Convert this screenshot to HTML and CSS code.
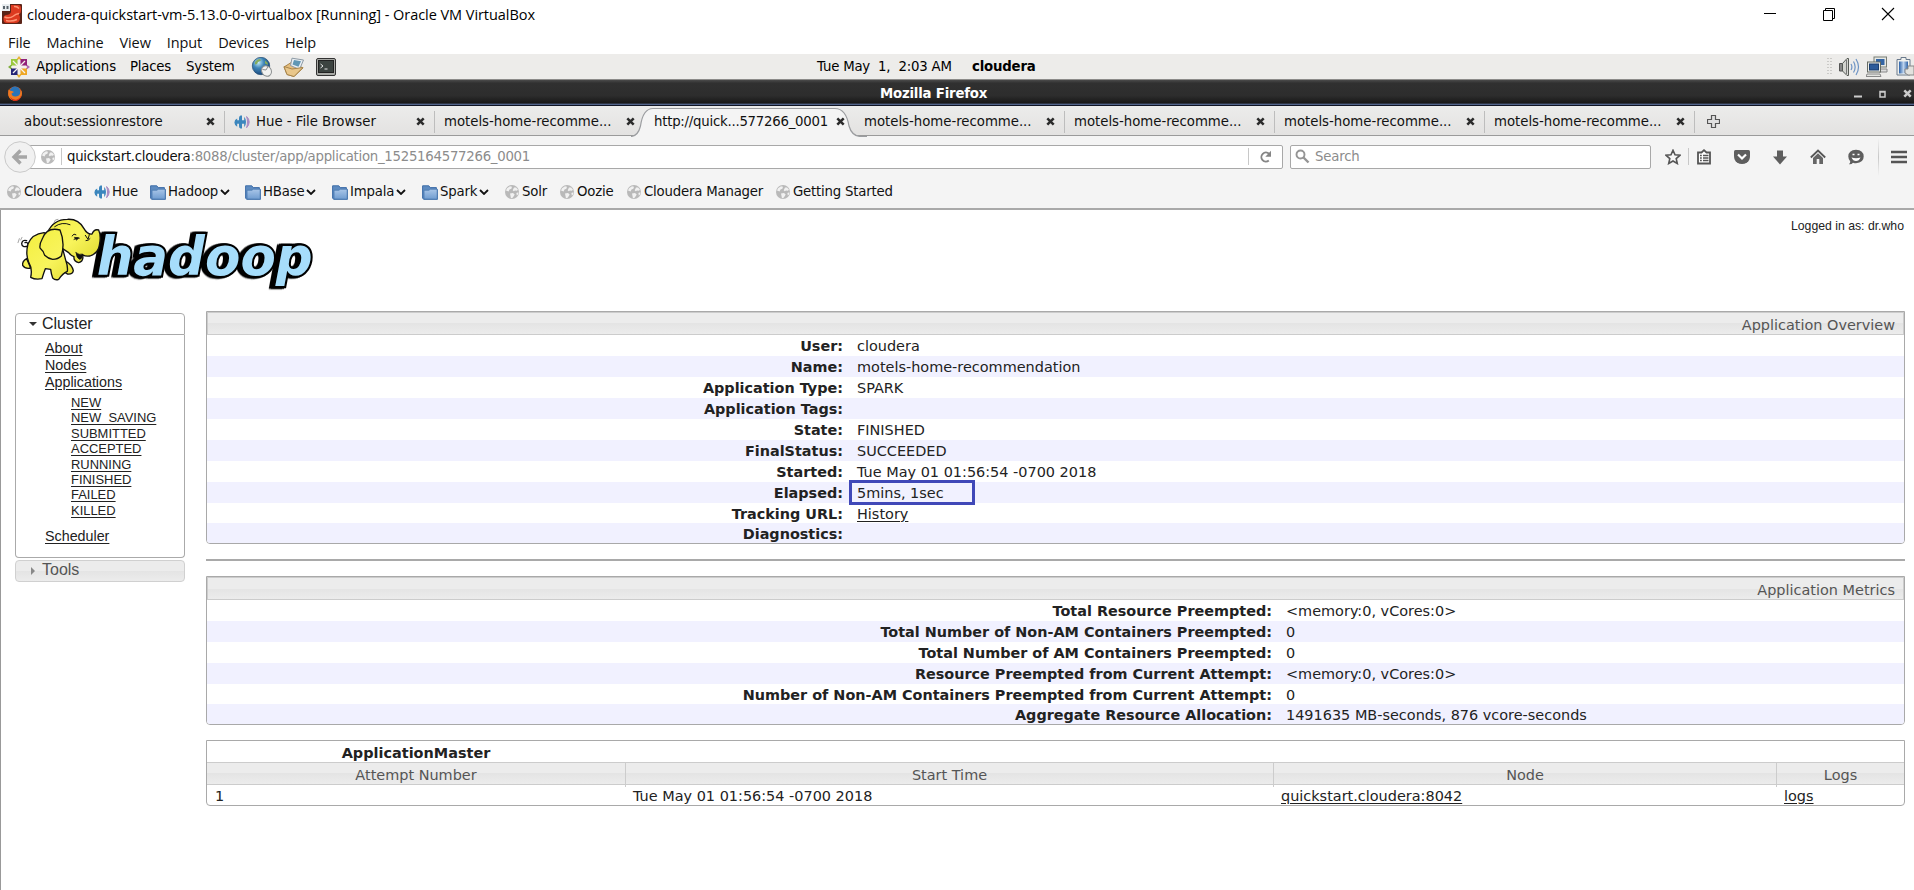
FILE: index.html
```html
<!DOCTYPE html>
<html lang="en">
<head>
<meta charset="utf-8">
<title>Mozilla Firefox</title>
<link rel="stylesheet" href="styles.css">
</head>
<body>
<svg class="defs" width="0" height="0" aria-hidden="true">
  <defs>
    <linearGradient id="folderFill" x1="0" y1="0" x2="0" y2="1"><stop offset="0" stop-color="#a9c6e8"/><stop offset="1" stop-color="#6f9cd0"/></linearGradient>
    <linearGradient id="elephantFill" gradientUnits="userSpaceOnUse" x1="60" y1="30" x2="220" y2="200"><stop offset="0" stop-color="#f3ee3c"/><stop offset=".55" stop-color="#f8f45c"/><stop offset="1" stop-color="#dfd92c"/></linearGradient>
    <radialGradient id="earthFill" cx=".35" cy=".3" r=".8"><stop offset="0" stop-color="#c4ecf6"/><stop offset=".4" stop-color="#3f86b8"/><stop offset="1" stop-color="#123a70"/></radialGradient>
    <linearGradient id="screenFill" x1="0" y1="0" x2="1" y2="0"><stop offset="0" stop-color="#2c62a8"/><stop offset=".5" stop-color="#bcd3ee"/><stop offset="1" stop-color="#2c62a8"/></linearGradient>
    <symbol id="globe" viewBox="0 0 14 14"><circle cx="7" cy="7" r="7" fill="#b9b9b9"/><path d="M2 3.200 5 1.200l2 .6-.6 2L4.500 4.600 3.600 6.400 1 5.500zM9 2.500l2.100-.1 1.900 2.400-1.200 1-1.800-.4-1.300.8-1-1zM5 8.500l3-.6 1.700 1.600-1 1.800-1.600 2-1.200-.4zM11.400 8l2-.8-.4 2.200-1.200 1.200z" fill="#f1f1f1"/></symbol>
    <symbol id="hue" viewBox="0 0 16 14"><path d="M6.500.5h1.500v4.800h2.200V1.800q1.800 2 1.800 5.200t-1.800 5.200V8.800H8v4.700H6.500Q5 13 5 11V8.800H3.200v3Q.4 10.300.4 7.500T3.200 3.500v1.800H5V3Q5 1 6.500.5z" fill="#3b86bd"/><path d="M12.600 1.500q2.600 2.300 2.600 5.500t-2.600 5.700q.9-2.800.9-5.700t-.9-5.500z" fill="#a98bc4" stroke="#a98bc4"/></symbol>
    <symbol id="folder" viewBox="0 0 16 15"><path d="M.6.8h6.200l1.400 1.800h6.200v2h1v9.700H1.800L.6 13.300z" fill="#5c8ac0" stroke="#3f6ea8"/><path d="M2 14V5.200h5l1.200-1h7v10z" fill="url(#folderFill)" stroke="#4a78b0" stroke-width=".8"/></symbol>
    <symbol id="cross" viewBox="0 0 9 9"><path d="M1.300 1.300 7.700 7.700M7.700 1.300 1.300 7.700" stroke="currentColor" stroke-width="2.500"/></symbol>
    <symbol id="chevron" viewBox="0 0 10 6"><path d="M1 1l4 4 4-4" fill="none" stroke="#111" stroke-width="1.800"/></symbol>
  </defs>
</svg>

<header class="vm-title">
  <svg class="vm-logo" width="20" height="20" viewBox="0 0 20 20"><rect width="20" height="20" rx="1" fill="#5b2418"/><path d="M9 1h7q3 0 3 3v3q0 2.500-2 3.500 1 1 1 3.500 0 5-5 5H5q-3.500 0-3.500-3.500Q1 11.500 4 11q4 0 5-3z" fill="#dc3a20"/><path d="M2.500 13q5 2 9-1 2-2 5.500-2.500M12 2.500q3-.5 5 2M4 16.500q6 1.500 11-1" fill="none" stroke="#ff9474" stroke-width="1.500"/><rect width="8" height="7" fill="#e8ecef"/><path d="M1 2h2v3H1zM4.500 2h2v3h-2z" fill="#58626a"/></svg>
  <span class="vm-caption">cloudera-quickstart-vm-5.13.0-0-virtualbox [Running] - Oracle VM VirtualBox</span>
  <div class="vm-buttons">
    <svg width="14" height="14" viewBox="0 0 14 14"><path d="M1 6.500h12" stroke="#000"/></svg>
    <svg width="14" height="14" viewBox="0 0 14 14"><path d="M1.500 3.500h9v10h-9zM3.500 3.500v-2h9v10h-2" fill="none" stroke="#000"/></svg>
    <svg width="14" height="14" viewBox="0 0 14 14"><path d="M1 1l12 12M13 1 1 13" stroke="#000" stroke-width="1.100"/></svg>
  </div>
</header>
<nav class="vm-menu"><span>File</span><span>Machine</span><span>View</span><span>Input</span><span>Devices</span><span>Help</span></nav>

<div class="panel">
  <div class="panel-left">
    <svg width="22" height="22" viewBox="0 0 22 22"><path d="M11 0l3 4h-6zM11 22l3-4H8z" fill="#e9b233"/><path d="M0 11l4-3v6z" fill="#7fae3c"/><path d="M22 11l-4-3v6z" fill="#b06bb0"/><path d="M3 3h6.500v6.500H3z" fill="#9bca3e"/><path d="M12.500 3H19v6.500h-6.500z" fill="#932279"/><path d="M3 12.500h6.500V19H3z" fill="#262577"/><path d="M12.500 12.500H19V19h-6.500z" fill="#efa724"/><path d="M5 5l12 12M17 5 5 17M11 3v16M3 11h16" stroke="#f6f2ee" stroke-width="1.300"/></svg>
    <span class="m-app">Applications</span><span class="m-places">Places</span><span class="m-system">System</span>
    <svg class="i-web" width="22" height="20" viewBox="0 0 22 20"><circle cx="10" cy="9" r="8.700" fill="url(#earthFill)" stroke="#214a70" stroke-width=".7"/><path d="M4 5q2-3 5-3l1 1.500-3 1.500-1 2-2 .5zM14 3.500l2.500 2 .5 2.500-3-1.500z" fill="#86ac5c"/><ellipse cx="15.500" cy="14" rx="4.700" ry="5.500" fill="#f2f2f0" stroke="#8b8f90" transform="rotate(-35 15.500 14)"/><path d="M11.500 12.500l3.500.5 2-3.500" fill="none" stroke="#8b8f90"/></svg>
    <svg class="i-mail" width="22" height="20" viewBox="0 0 22 20"><path d="M1 10 9 5l11 6-9 8.500-7-2z" fill="#e5bd7c" stroke="#a7844b"/><path d="M9 1.200 20.500 3l-4 9.500-9-4z" fill="#e9eef2" stroke="#8d9aa5"/><path d="M11 3l7 1.200-2.500 5.500-6-2.200z" fill="#5f97b5"/><path d="M1 9.500l8 2.500 11-1.500-9 9-7-2z" fill="#e9c78b" stroke="#a7844b"/></svg>
    <svg class="i-term" width="20" height="18" viewBox="0 0 20 18"><rect x=".5" y=".5" width="19" height="17" rx="1.500" fill="#a9aaa6" stroke="#333"/><rect x="2.500" y="2.500" width="15" height="12" fill="#3c4340" stroke="#222"/><path d="M4.500 6l2.500 2-2.500 2M8.500 11h3" fill="none" stroke="#e8e8e8"/></svg>
  </div>
  <div class="clock"><span class="clock-time">Tue May&nbsp; 1,&nbsp; 2:03 AM</span><b>cloudera</b></div>
  <div class="tray">
    <svg width="5" height="17" viewBox="0 0 5 17"><path d="M1 0v17M4 0v17" stroke="#a9a8a5" stroke-dasharray="1 2"/></svg>
    <svg class="i-vol" width="22" height="20" viewBox="0 0 22 20"><path d="M1.500 6.500h3V14h-3z" fill="#888" stroke="#555"/><path d="M4.500 6.500 9 1.500h1.500v17H9L4.500 14z" fill="#d4d5d0" stroke="#555a55"/><path d="M8.500 3v14" stroke="#777"/><path d="M13 7q1.800 3 0 6M15.500 4.500q3.300 5.500 0 11M18 2q5 8 0 16" fill="none" stroke="#6d93c4" stroke-width="1.200"/></svg>
    <svg class="i-net" width="22" height="21" viewBox="0 0 22 21"><rect x="8" y="1" width="12.500" height="10" fill="#e6e8e4" stroke="#777c75"/><rect x="10" y="3" width="8.500" height="6" fill="#3465a4"/><path d="M10 13h11v3H13z" fill="#ddd" stroke="#888"/><rect x="1.500" y="6" width="13" height="10" fill="#eceeea" stroke="#666b64"/><rect x="3.500" y="8" width="9" height="6" fill="#2d5b9a" stroke="#1d3f70"/><path d="M1 18h13l1 2.500H0z" fill="#e3e4e0" stroke="#888"/></svg>
    <svg class="i-bat" width="18" height="21" viewBox="0 0 18 21"><path d="M1 3.500h4v-2h5v2h4V19H1z" fill="#f0f1ee" stroke="#6a7a8c"/><rect x="3" y="5.500" width="9" height="12" fill="url(#screenFill)"/><path d="M9 13h3v-3h6v9h-6l-3-2z" fill="#e2e2de" stroke="#888"/></svg>
  </div>
</div>

<div class="ff-title">
  <svg class="ff-logo" width="14" height="15" viewBox="0 0 14 15"><circle cx="7" cy="7.500" r="6.900" fill="#e8601c"/><path d="M7 13.500q-4-1-4.500-5L2 3.500 4.500 1Q8-.5 11 2q2 3 1 6.500-1.500 4-5 5z" fill="#2a74b8"/><path d="M.4 3.500Q2 5 4 5l2 1-2.500 1.500Q4 11 8 10.500q4-.5 4.500-4.500l.8-1.500q1.600 4-1 7.500-3 3.500-7 2.500-4-1-5-5.500z" fill="#ee7a22"/><path d="M2 11q3 3.500 7 2.500 3.500-1.500 4.500-4.500-1 5.600-6 6-4 0-5.500-4z" fill="#d42c17"/></svg>
  <span>Mozilla Firefox</span>
  <div class="ff-buttons">
    <svg width="8" height="9" viewBox="0 0 8 9"><path d="M0 7.500h8" stroke="#ccc" stroke-width="2"/></svg>
    <svg width="7" height="9" viewBox="0 0 7 9"><path d="M1 2.500h5V8H1zM1 3h5" fill="none" stroke="#ccc" stroke-width="1.500"/></svg>
    <svg width="9" height="9" viewBox="0 0 9 9" color="#ccc"><use href="#cross"/></svg>
  </div>
</div>

<div class="tabs">
  <div class="tab"><span>about:sessionrestore</span><svg class="x"><use href="#cross"/></svg></div>
  <div class="tab"><svg class="hue-i"><use href="#hue"/></svg><span>Hue - File Browser</span><svg class="x"><use href="#cross"/></svg></div>
  <div class="tab no-sep"><span>motels-home-recomme...</span><svg class="x"><use href="#cross"/></svg></div>
  <div class="tab active no-sep"><svg class="tab-shape" width="236" height="30" viewBox="0 0 236 30"><path d="M0 29.500Q7 29 9.500 19 12 1.500 22 1.500H204Q215 1.500 218 19 221 29.500 230 29.500L236 30H0z" fill="#f4f4f4"/><path d="M0 29.500Q7 29 9.500 19 12 1.500 22 1.500H204Q215 1.500 218 19 221 29.500 230 29.500h6" fill="none" stroke="#9b9da0" stroke-width="1.200"/></svg><span>http://quick...577266_0001</span><svg class="x"><use href="#cross"/></svg></div>
  <div class="tab"><span>motels-home-recomme...</span><svg class="x"><use href="#cross"/></svg></div>
  <div class="tab"><span>motels-home-recomme...</span><svg class="x"><use href="#cross"/></svg></div>
  <div class="tab"><span>motels-home-recomme...</span><svg class="x"><use href="#cross"/></svg></div>
  <div class="tab"><span>motels-home-recomme...</span><svg class="x"><use href="#cross"/></svg></div>
  <svg class="new-tab" width="13" height="13" viewBox="0 0 13 13"><path d="M4.500.5h4v4h4v4h-4v4h-4v-4h-4v-4h4z" fill="#e0e0e0" stroke="#555" stroke-width="1.200"/></svg>
</div>

<div class="navbar">
  <svg class="back" width="32" height="32" viewBox="0 0 32 32"><circle cx="16" cy="16" r="15.300" fill="#f1f1f1" stroke="#c9c9c9"/><path d="M23 16H11M16.500 9.500 10 16l6.500 6.500" fill="none" stroke="#a6a6a6" stroke-width="3.400"/></svg>
  <div class="urlbar">
    <svg class="globe-i"><use href="#globe"/></svg><i class="vsep"></i>
    <span class="url">quickstart.cloudera<em>:8088/cluster/app/application_1525164577266_0001</em></span>
    <div class="reload"><svg width="12" height="13" viewBox="0 0 12 13"><path d="M8.800 10.500A4.500 4.500 0 1 1 9 3.800" fill="none" stroke="#858585" stroke-width="1.900"/><path d="M11 .8v6H5.300z" fill="#858585"/></svg></div>
  </div>
  <div class="search"><svg width="15" height="15" viewBox="0 0 15 15"><circle cx="5.500" cy="5.500" r="4" fill="none" stroke="#959595" stroke-width="1.900"/><path d="M8.500 8.500l5 5" stroke="#959595" stroke-width="2.400"/></svg><span>Search</span></div>
  <div class="tools">
    <svg width="16" height="16" viewBox="0 0 16 16"><path d="M8 1.300l2 4.500 4.900.5-3.700 3.300 1.100 4.900L8 12l-4.300 2.500 1.100-4.900L1.100 6.300 6 5.800z" fill="#f8f8f8" stroke="#555" stroke-width="1.600"/></svg>
    <i class="vsep"></i>
    <svg width="14" height="16" viewBox="0 0 14 16"><path d="M1 3.500h3.500L7 1.200l2.500 2.300H13v11H1z" fill="#fff" stroke="#555" stroke-width="1.800"/><path d="M3 6.500h1.800M3 9h1.800M3 11.500h1.800M6 6.500h5.500M6 9h5.500M6 11.500h5.500" stroke="#555" stroke-width="1.400"/></svg>
    <svg width="16" height="16" viewBox="0 0 16 16"><path d="M0 2.500Q0 1 1.500 1h13Q16 1 16 2.500V7q0 4-3 6.500-5 3-10 0Q0 11 0 7z" fill="#5e5e5e"/><path d="M4 5.500l4 4 4-4" fill="none" stroke="#fff" stroke-width="2.200"/></svg>
    <svg width="16" height="16" viewBox="0 0 16 16"><path d="M5 1.500h6v6h4L8 15.500 1 7.500h4z" fill="#5e5e5e"/></svg>
    <svg width="16" height="16" viewBox="0 0 16 16"><path d="M.8 8.500 8 1.600l7.200 6.900" fill="none" stroke="#555" stroke-width="1.800"/><path d="M3 9l5-4.700L13 9v6H9.300v-5H6.700v5H3z" fill="#666"/></svg>
    <svg width="16" height="16" viewBox="0 0 16 16"><path d="M8 .8q7.700.5 7.700 6.700T8 14.200q-1.500 0-3-.5-1.500 1.800-4 1.500 1.500-1.300 1.200-3Q.3 10 .3 7.500.3 1.300 8 .8z" fill="#5e5e5e"/><path d="M4.500 5.500h2M9.500 5.500h2" stroke="#fff" stroke-width="1.600"/><path d="M3.500 8.500Q8 10 12.500 8.500 11 12 8 12T3.500 8.500z" fill="#fff"/></svg>
    <i class="vsep tall"></i>
    <svg width="16" height="14" viewBox="0 0 16 14"><path d="M0 2h16M0 7h16M0 12h16" stroke="#555" stroke-width="2.600"/></svg>
  </div>
</div>

<div class="bookmarks">
  <span><svg class="globe-i"><use href="#globe"/></svg>Cloudera</span>
  <span><svg class="hue-i"><use href="#hue"/></svg>Hue</span>
  <span><svg class="folder-i"><use href="#folder"/></svg>Hadoop<svg class="chev"><use href="#chevron"/></svg></span>
  <span><svg class="folder-i"><use href="#folder"/></svg>HBase<svg class="chev"><use href="#chevron"/></svg></span>
  <span><svg class="folder-i"><use href="#folder"/></svg>Impala<svg class="chev"><use href="#chevron"/></svg></span>
  <span><svg class="folder-i"><use href="#folder"/></svg>Spark<svg class="chev"><use href="#chevron"/></svg></span>
  <span><svg class="globe-i"><use href="#globe"/></svg>Solr</span>
  <span><svg class="globe-i"><use href="#globe"/></svg>Oozie</span>
  <span><svg class="globe-i"><use href="#globe"/></svg>Cloudera Manager</span>
  <span><svg class="globe-i"><use href="#globe"/></svg>Getting Started</span>
</div>

<main class="page">
  <div class="page-head">
    <svg class="logo" width="320" height="80" viewBox="0 0 960 240">
      <text class="wordmark" x="260" y="188" textLength="648" lengthAdjust="spacingAndGlyphs">hadoop</text>
      <g fill="url(#elephantFill)" stroke="#111" stroke-width="4" stroke-linejoin="round" stroke-linecap="round">
        <path d="M54 102Q36 108 35 95 37 82 50 86M45 92q8-3 10 8" fill="none"/>
        <path d="M50 140Q36 148 38 160 46 172 62 168zM168 148q18 10 22 28-2 12-18 10l-12-8z"/>
        <path d="M102 62Q66 66 54 96 46 126 56 150 68 170 62 196 76 204 96 200 102 180 106 170l16 2q2 16 6 26 8 8 18 4 12-18 26-24 2-14-4-30L150 80z"/>
        <path d="M112 62Q130 22 172 22 206 20 222 50 232 68 246 66 252 50 266 54 274 72 268 100 266 122 240 132 226 134 218 128q4 20-12 24-16-4-14-18-8-2-16-12L128 90z"/>
        <path d="M150 54Q112 44 98 78 88 96 90 108q10 8 14 22 10 10 24 12 16 0 26-10Q166 92 150 54z"/>
        <path d="M134 44q22-16 46-6M186 72q6-10 12-4M192 82q10-8 16-4M226 70l8 12 4-14M228 86q8 0 12-6" fill="none" stroke-width="3"/>
        <path d="M198 122q10 8 20 4 0 16-10 16-8-4-10-20zM194 76l12 2-6 6z" fill="#111" stroke-width="2"/>
        <path d="M24 92l4-12M32 84l4-8M132 32l4-8 8-2" fill="none" stroke="#777" stroke-width="2"/>
      </g>
    </svg>
    <span class="login">Logged in as: dr.who</span>
  </div>
  <div class="columns">
    <aside class="side">
      <h3 class="acc open"><i></i>Cluster</h3>
      <div class="acc-body">
        <a>About</a><a>Nodes</a><a>Applications</a>
        <div class="states"><a>NEW</a><a>NEW_SAVING</a><a>SUBMITTED</a><a>ACCEPTED</a><a>RUNNING</a><a>FINISHED</a><a>FAILED</a><a>KILLED</a></div>
        <a>Scheduler</a>
      </div>
      <h3 class="acc closed"><i></i>Tools</h3>
    </aside>
    <section class="content">
      <div class="info overview">
        <div class="info-head">Application Overview</div>
        <dl>
          <dt>User:</dt><dd>cloudera</dd>
          <dt>Name:</dt><dd>motels-home-recommendation</dd>
          <dt>Application Type:</dt><dd>SPARK</dd>
          <dt>Application Tags:</dt><dd></dd>
          <dt>State:</dt><dd>FINISHED</dd>
          <dt>FinalStatus:</dt><dd>SUCCEEDED</dd>
          <dt>Started:</dt><dd>Tue May 01 01:56:54 -0700 2018</dd>
          <dt>Elapsed:</dt><dd class="marked">5mins, 1sec</dd>
          <dt>Tracking URL:</dt><dd><a>History</a></dd>
          <dt>Diagnostics:</dt><dd></dd>
        </dl>
      </div>
      <hr>
      <div class="info metrics">
        <div class="info-head">Application Metrics</div>
        <dl>
          <dt>Total Resource Preempted:</dt><dd>&lt;memory:0, vCores:0&gt;</dd>
          <dt>Total Number of Non-AM Containers Preempted:</dt><dd>0</dd>
          <dt>Total Number of AM Containers Preempted:</dt><dd>0</dd>
          <dt>Resource Preempted from Current Attempt:</dt><dd>&lt;memory:0, vCores:0&gt;</dd>
          <dt>Number of Non-AM Containers Preempted from Current Attempt:</dt><dd>0</dd>
          <dt>Aggregate Resource Allocation:</dt><dd>1491635 MB-seconds, 876 vcore-seconds</dd>
        </dl>
      </div>
      <div class="attempts">
        <div class="row title"><b>ApplicationMaster</b></div>
        <div class="row head"><span>Attempt Number</span><span>Start Time</span><span>Node</span><span>Logs</span></div>
        <div class="row data"><span>1</span><span>Tue May 01 01:56:54 -0700 2018</span><span><a>quickstart.cloudera:8042</a></span><span><a>logs</a></span></div>
      </div>
    </section>
  </div>
</main>
</body>
</html>
```
FILE: styles.css
```css
*, *::before, *::after { box-sizing: border-box; }
body {
  margin: 0; width: 1914px; height: 890px; overflow: hidden;
  display: flex; flex-direction: column;
  background: #fff; color: #111;
  font: 13.3px/20px "DejaVu Sans", sans-serif;
  letter-spacing: -.2px; white-space: nowrap;
}
svg { display: block; flex: none; }
.defs { position: absolute; }
.globe-i { width: 14px; height: 14px; }
.hue-i { width: 16px; height: 14px; }
.folder-i { width: 16px; height: 15px; }
.chev { width: 10px; height: 6px; }
.x { width: 9px; height: 9px; color: #2b2b2b; }

/* host window */
.vm-title { height: 30px; flex: none; display: flex; align-items: center; padding: 0 19px 2px 2px; font: 14.5px/20px "Open Sans", sans-serif; color: #000; letter-spacing: -.05px; }
.vm-caption { margin-left: 5px; padding-top: 1px; }
.vm-buttons { margin-left: auto; display: flex; gap: 45px; }
.vm-menu { height: 24px; flex: none; display: flex; gap: 16px; padding: 3px 8px 0; font: 14.5px/20px "Open Sans", sans-serif; letter-spacing: -.1px; }

/* guest desktop panel */
.panel { height: 26px; flex: none; display: grid; grid-template-columns: 817px 1010px 1fr; align-items: center; background: #edecea; border-bottom: 1px solid #8c8b89; color: #000; }
.panel-left, .clock, .tray { display: flex; align-items: center; }
.panel-left { padding-left: 8px; }
.m-app { margin-left: 6px; width: 94px; letter-spacing: -.1px; }
.m-places { width: 56px; }
.m-system { width: 64px; }
.i-web { margin-left: 1px; }
.i-mail { margin-left: 10px; }
.i-term { margin-left: 11px; }
.clock-time { width: 155px; }
.i-vol { margin-left: 6px; }
.i-net { margin-left: 6px; }
.i-bat { margin-left: 8px; }

.ff-title { height: 26px; flex: none; display: grid; grid-template-columns: 880px 1fr auto; align-items: center; padding: 3px 2px 2px 0; background: linear-gradient(#4a4a4a, #303030 12%, #2d2d2d 60%, #171717 90%, #52648a 91%, #52648a 95%, #101525 96%); color: #fff; font-weight: bold; }
.ff-logo { margin-left: 8px; }
.ff-buttons { display: flex; gap: 17px; }

.tabs { height: 30px; flex: none; display: flex; align-items: center; padding-left: 15px; background: linear-gradient(#ececeb, #e3e2e1); border-bottom: 1px solid #9a9a9a; letter-spacing: -.02px; }
.tab { position: relative; width: 210px; height: 22px; margin-top: 3px; display: flex; align-items: center; gap: 6px; padding: 0 9px 0 9px; border-right: 1px solid #bdbdbd; }
.tab .x { margin: 0 0 1px auto; }
.tab span { position: relative; }
.no-sep { border-right-color: transparent; }
.tab-shape { position: absolute; left: -14px; top: -4px; }
.active { letter-spacing: -.24px; }
.active .x { position: relative; }
.new-tab { margin: 2px 0 0 12px; }

.navbar { height: 40px; flex: none; display: flex; align-items: center; padding-top: 1px; background: #f4f4f4; }
.back { margin-left: 4px; position: relative; z-index: 1; }
.urlbar { width: 1256px; height: 24px; margin-left: -9px; display: flex; align-items: center; padding-left: 13px; background: #fff; border: 1px solid #a8a8a8; border-radius: 2px; }
.vsep { width: 1px; height: 17px; background: #c8c8c8; }
.urlbar > .vsep { margin: 0 5px 0 6px; }
.url { letter-spacing: -.27px; }
.url em { font-style: normal; color: #8c8c8c; }
.reload { margin-left: auto; width: 34px; height: 17px; border-left: 1px solid #c8c8c8; display: flex; align-items: center; justify-content: center; }
.search { width: 361px; height: 24px; margin-left: 7px; display: flex; align-items: center; gap: 5px; padding-left: 4px; background: #fff; border: 1px solid #a8a8a8; border-radius: 2px; color: #8c8c8c; }
.tools { display: flex; align-items: center; margin-left: 14px; }
.tools > svg { margin-right: 22px; }
.tools > svg:first-child { margin-right: 7px; }
.tools > .vsep + svg { margin-left: 8px; margin-right: 23px; }
.tools > .tall { height: 38px; background: linear-gradient(#f4f4f4, #c8c8c8, #f4f4f4); margin-left: -8px; }
.tools > .tall + svg { margin-left: 12px; margin-right: 0; }

.bookmarks { height: 34px; flex: none; display: grid; grid-template-columns: 87px 56px 95px 87px 90px 83px 55px 67px 149px auto; justify-content: start; align-items: center; padding: 0 0 0 7px; background: #f4f4f4; border-bottom: 2px solid #a9a9a9; }
.bookmarks span { display: flex; align-items: center; gap: 2px; }
.bookmarks .globe-i { margin-right: 1px; }

/* hadoop page */
.page { flex: 1; border-left: 1px solid #999; color: #222; letter-spacing: 0; }
.page-head { height: 101px; display: flex; justify-content: space-between; padding: 2px 10px 0 9px; }
.login { font: 12.25px/16px "Liberation Sans", sans-serif; padding-top: 6px; }
.wordmark {
  font: italic bold 160px "DejaVu Sans", sans-serif;
  fill: #a6ddfb; stroke: #000; stroke-width: 13px; stroke-linejoin: miter; paint-order: stroke;
  filter: drop-shadow(-6px 1px 0 #000) drop-shadow(-6px 1px 0 #000);
}
.columns { display: flex; align-items: flex-start; }
.page a { text-decoration: underline; text-underline-offset: 2px; }

.side { width: 170px; margin: 2px 0 0 14px; font: 14.3px/17px "Liberation Sans", sans-serif; }
.acc { margin: 0; height: 22px; display: flex; align-items: center; padding: 0 0 1px 12px; font: 16px/20px "Liberation Sans", sans-serif; border: 1px solid #aaa; border-radius: 4px; }
.acc i { width: 14px; height: 9px; }
.acc i::before { content: ""; display: block; width: 0; border: 4px solid transparent; }
.open { border-radius: 4px 4px 0 0; }
.open i::before { border-top-color: #333; margin: 3px 0 0 1px; }
.closed { margin-top: 2px; padding-bottom: 2px; color: #555; background: linear-gradient(#ececec 50%, #e4e4e4 50%, #ececec); border-color: #d0d0d0; }
.closed i::before { border-left-color: #888; margin: 1px 0 0 3px; }
.acc-body { height: 223px; border: 1px solid #aaa; border-top: 0; border-radius: 0 0 4px 4px; padding: 5px 0 0 29px; }
.acc-body a { display: block; width: max-content; }
.states { margin: 4px 0 10px 26px; font-size: 12.95px; line-height: 15.4px; }

.content { width: 1699px; margin-left: 21px; font-size: 14.45px; line-height: 21px; }
.info { border: 1px solid #a9a9a9; border-radius: 0 0 4px 4px; overflow: hidden; }
.info-head { height: 23px; padding: 2px 8px 0 0; text-align: right; color: #555; background: linear-gradient(#ececec 50%, #e4e4e4 50%, #ececec); border: 1px solid #ccc; line-height: 20px; }
.info dl { margin: 0; display: grid; line-height: 23px; }
.overview dl { grid-template-columns: 636px 1fr; grid-template-rows: repeat(8, 21px) 20px 20px; }
.metrics dl { grid-template-columns: 1065px 1fr; grid-template-rows: repeat(4, 21px) 20px 20px; }
.info dt { text-align: right; font-weight: bold; font-size: 14.4px; }
.info dd { margin: 0; padding-left: 14px; position: relative; }
.info dt:nth-of-type(even), .info dd:nth-of-type(even) { background: #f1f1ff; }
.marked::after { content: ""; position: absolute; left: 6px; top: -2px; width: 126px; height: 25px; border: 3px solid #4048b8; z-index: 1; }
.content hr { margin: 15px 0; height: 2px; border: 0; background: #a9a9a9; }

.attempts { margin-top: 15px; border: 1px solid #a9a9a9; border-radius: 0 0 4px 4px; }
.row { display: grid; grid-template-columns: 418px 648px 503px 1fr; }
.title b { text-align: center; }
.title { height: 21px; line-height: 25px; }
.head { height: 23px; line-height: 24px; text-align: center; color: #555; background: linear-gradient(#ececec 50%, #e4e4e4 50%, #ececec); border: 1px solid #ccc; border-width: 1px 0; }
.head span + span { border-left: 1px solid #ccc; }
.data { height: 20px; line-height: 22px; }
.data span { padding-left: 8px; }
```
